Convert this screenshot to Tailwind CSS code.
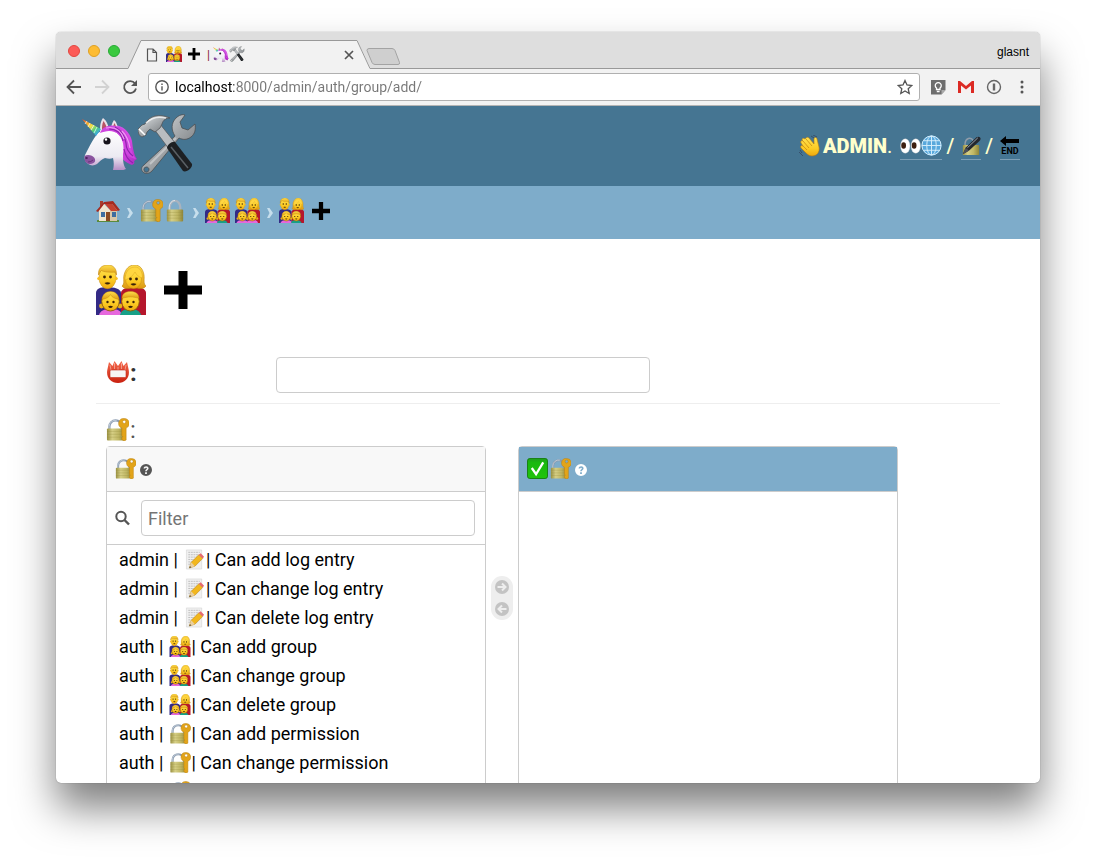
<!DOCTYPE html>
<html lang="en">
<head>
<meta charset="utf-8">
<title>Add group</title>
<script src="https://cdn.jsdelivr.net/npm/@tailwindcss/browser@4"></script>
</head>
<body class="h-screen overflow-hidden bg-white px-14 pt-8 pb-20 flex flex-col font-[Roboto,sans-serif] text-black">

<svg class="absolute size-0" aria-hidden="true">
  <defs>
    <linearGradient id="skin" x1="0" y1="0" x2="0" y2="1"><stop offset="0" stop-color="#ffe352"/><stop offset=".6" stop-color="#fccb24"/><stop offset="1" stop-color="#eda90f"/></linearGradient>
    <linearGradient id="hair" x1="0" y1="0" x2="0" y2="1"><stop offset="0" stop-color="#ffdf4d"/><stop offset="1" stop-color="#dd9a12"/></linearGradient>
    <linearGradient id="brass" x1="0" y1="0" x2="1" y2="0"><stop offset="0" stop-color="#9a9142"/><stop offset=".3" stop-color="#d6cf85"/><stop offset=".65" stop-color="#c0b764"/><stop offset="1" stop-color="#8d8439"/></linearGradient>
    <linearGradient id="steel" x1="0" y1="0" x2="1" y2="1"><stop offset="0" stop-color="#e6eaec"/><stop offset=".5" stop-color="#a2a6a9"/><stop offset="1" stop-color="#62666a"/></linearGradient>
    <linearGradient id="mane" x1="0" y1="0" x2="1" y2="1"><stop offset="0" stop-color="#c05be8"/><stop offset=".5" stop-color="#dc4be6"/><stop offset="1" stop-color="#a92bc0"/></linearGradient>
    <linearGradient id="horse" x1="0" y1="0" x2="0" y2="1"><stop offset="0" stop-color="#ffffff"/><stop offset=".65" stop-color="#eceaf2"/><stop offset="1" stop-color="#b58ac4"/></linearGradient>
    <linearGradient id="horn" x1="0" y1="0" x2="1" y2="1"><stop offset="0" stop-color="#e2452f"/><stop offset=".25" stop-color="#f4a02c"/><stop offset=".45" stop-color="#f3e24a"/><stop offset=".65" stop-color="#4fcf7a"/><stop offset=".85" stop-color="#3aa7e8"/><stop offset="1" stop-color="#7d6be0"/></linearGradient>
    <linearGradient id="red" x1="0" y1="0" x2="0" y2="1"><stop offset="0" stop-color="#f4694c"/><stop offset="1" stop-color="#c9200f"/></linearGradient>
    <linearGradient id="green" x1="0" y1="0" x2="0" y2="1"><stop offset="0" stop-color="#1f9c1c"/><stop offset=".2" stop-color="#19b80f"/><stop offset="1" stop-color="#20c40c"/></linearGradient>

    <g id="adults">
      <path d="M0 50V28c0-4 4-6 11-6s14 2 14 6v22z" fill="#332a85"/>
      <path d="M25 50V28c0-4 6-6 13-6s12 2 12 6v22z" fill="#b5162c"/>
      <ellipse cx="11.500" cy="12.500" rx="8.600" ry="11.200" fill="url(#skin)" stroke="#c98a12" stroke-width=".5"/>
      <circle cx="2.800" cy="13.500" r="1.600" fill="#f7bd1e"/><circle cx="20.200" cy="13.500" r="1.600" fill="#f7bd1e"/>
      <path d="M2.500 10C2 4 5 .5 11 0c6-.5 10 3.500 9.500 10l-1.500-3C14 7.500 8 7 5.500 5.500L4 7z" fill="url(#hair)" stroke="#bf830c" stroke-width=".5"/>
      <path d="M26 21c3-2 1-7 2-11C29.500 4 33 0 38.500 0S47 4 48 10c.6 4-1 9 2 11-2 3-6 3-9 2h-6c-3 1-7 1-9-2z" fill="url(#hair)" stroke="#bf830c" stroke-width=".6"/>
      <ellipse cx="37.500" cy="14" rx="8" ry="9.500" fill="url(#skin)" stroke="#c98a12" stroke-width=".5"/>
      <path d="M29 15c0-8 4-13 10-13 5 0 7.500 5 7.500 11-4-1-6-3-7.500-6-2 4-5.500 6.500-10 8z" fill="#ffd640" stroke="#d79a17" stroke-width=".4"/>
      <g fill="#3a2208"><circle cx="8.500" cy="12" r="1.400"/><circle cx="14.500" cy="12" r="1.400"/><circle cx="34.500" cy="14" r="1.400"/><circle cx="40.500" cy="14" r="1.400"/><path d="M8.500 18q3-1.500 6 0-3 3-6 0zM34.500 19q3-1.500 6 0-3 3-6 0z"/></g>
    </g>
    <g id="girl">
      <path d="M3 50c1-4 5-6 12-6s10 2 11 6z" fill="#e668dd"/>
      <circle cx="5.500" cy="41" r="2.400" fill="#eab01b"/><circle cx="24" cy="41" r="2.400" fill="#eab01b"/>
      <ellipse cx="14.500" cy="36.500" rx="8.800" ry="9.500" fill="url(#skin)" stroke="#8f5c08" stroke-width=".9"/>
      <path d="M6 34.500c.5-5 3.500-8 8.500-8s8 3 8.500 8c-4.500-1-7-2-8.500-5-1.500 3-4 4-8.500 5z" fill="url(#hair)" stroke="#c2860e" stroke-width=".4"/>
      <g fill="#3a2208"><circle cx="11.500" cy="37" r="1.200"/><circle cx="17.500" cy="37" r="1.200"/><path d="M12 41.500q2.500-1.500 5 0-2.500 3-5 0z"/></g>
    </g>
    <g id="boy">
      <path d="M24 50c1-4 4-6 10-6s10 2 11 6z" fill="#17a087"/>
      <ellipse cx="34.500" cy="36.500" rx="8.800" ry="9.500" fill="url(#skin)" stroke="#8f5c08" stroke-width=".9"/>
      <path d="M26 33.500c0-4.500 3-7 8.500-7s8.500 2.500 8.500 7c-5-2-12-2-17 0z" fill="url(#hair)" stroke="#c2860e" stroke-width=".4"/>
      <g fill="#3a2208"><circle cx="31.500" cy="37" r="1.200"/><circle cx="37.500" cy="37" r="1.200"/><path d="M32 41.500q2.500-1.500 5 0-2.500 3-5 0z"/></g>
    </g>
  </defs>

  <symbol id="family" viewBox="0 0 50 50"><use href="#adults"/><use href="#girl"/><use href="#boy"/></symbol>
  <symbol id="family-girls" viewBox="0 0 50 50"><use href="#adults"/><use href="#girl"/><use href="#girl" x="20"/></symbol>
  <symbol id="plus" viewBox="0 0 38 38"><path d="M14.500 0h9v14.500H38v9H23.500V38h-9V23.500H0v-9h14.500z" fill="#000"/></symbol>

  <symbol id="lock-key" viewBox="0 0 24 24">
    <path d="M3.500 12V9a6.500 6.500 0 0 1 13 0v3" fill="none" stroke="#8a9bb0" stroke-width="2.400"/>
    <path d="M3.200 12V9a6.800 6.800 0 0 1 8-6.600" fill="none" stroke="#c3ced9" stroke-width="1"/>
    <rect x="1" y="11" width="18.500" height="12.500" rx="1" fill="url(#brass)"/>
    <path d="M1 14h18M1 17h18M1 20h18" stroke="#8f8639" stroke-opacity=".35" stroke-width=".8"/>
    <path fill-rule="evenodd" d="M19 .5a5.200 5.200 0 0 1 2 10v12.500l-2 1-2.500-1.500v-2l1-1-1-1v-8A5.200 5.200 0 0 1 19 .5zm0 1.800a1.700 1.700 0 1 0 0 3.400 1.700 1.700 0 0 0 0-3.400z" fill="#e2a41a" stroke="#b87c0a" stroke-width=".5"/>
  </symbol>
  <symbol id="lock" viewBox="0 0 18 24">
    <path d="M3.500 12V8.500a5.500 6.500 0 0 1 11 0V12" fill="none" stroke="#a8b3bf" stroke-width="2.400"/>
    <path d="M3 12V8.500a6 7 0 0 1 6-7" fill="none" stroke="#dfe5ea" stroke-width="1"/>
    <rect x=".5" y="11" width="17" height="12.500" rx="1" fill="url(#brass)"/>
    <path d="M.5 14h17M.5 17h17M.5 20h17" stroke="#8f8639" stroke-opacity=".35" stroke-width=".8"/>
  </symbol>
  <symbol id="lock-pen" viewBox="0 0 22 22">
    <path d="M4.500 11V8a5 6 0 0 1 9-3" fill="none" stroke="#8f9ca9" stroke-width="1.600"/>
    <rect x="2" y="10" width="18" height="11" rx="1" fill="url(#brass)"/>
    <path d="M2 20l3-7L17 1.500c2-1.500 4.500-.5 4.500 1.500 0 1-.5 1.800-1.200 2.500L9 16z" fill="#23272e"/><path d="M2 20l3-7 4 3z" fill="#4c5159"/><path d="M7 13L18.500 2" stroke="#a3adb8" stroke-width="1"/>
  </symbol>

  <symbol id="unicorn" viewBox="0 0 56 54">
    <path d="M30 9c9-1 18 6 20 16 1 8 2 14 5 18l-3 2c1 2 0 3-2 4-5-2-10-5-13-11L27 16z" fill="url(#mane)"/>
    <path d="M18 17c0-6 0-11 3-15 4 3 6 8 6 14zM29 14c0-4 1-7 3-10 4 3 4 9 3 14z" fill="#e9dfe7"/><path d="M20 14c0-3 0-6 1.500-9 2 3 3.500 6 3.500 9zM31 14c0-3 0-4 1.500-7 2 3 2 7 1 10z" fill="#b85365"/>
    <path d="M16 17c5-4 15-4 20 1 6 6 6 14 5 20 0 6 0 11 3 15-4 2-9 2-13 1 1-4 1-8 0-12-2 1-5 1-8 0-3 1-5 3-8 6-3 2-7 2-10-1-2-2-3-5-2-8 4-7 7-15 13-22z" fill="url(#horse)"/>
    <path d="M2.500 40c3-2 8-1 10 2 1 2 1 4-1 5-3 2-6 1-8-1-1-2-1-4-1-6z" fill="#8a539f"/>
    <ellipse cx="4.500" cy="42" rx="1.300" ry=".9" fill="#4e205e"/><path d="M6 46q3 0 5-2" fill="none" stroke="#5e2a70" stroke-width=".8"/>
    <path d="M0 3l19 10-5 7z" fill="url(#horn)"/><path d="M5 5l-2 3M8 7l-2 4M12 9l-3 5M15 11l-3 6" stroke="#fff" stroke-opacity=".7" stroke-width="1"/>
    <path d="M18 17c2-6 9-9 16-7 8 2 12 8 14 16 1 7 2 12 6 17-6-1-12-5-12-12 1-5-1-9-5-12-3-3-6-4-10-4-3 0-6 1-9 2z" fill="#cf45df"/>
    <path d="M27 13c7 0 13 4 14 12M33 11c7 4 10 9 11 16 0 5 3 10 7 13M42 33c1 6 4 11 9 14" fill="none" stroke="#8f23ad" stroke-width="1.200"/>
    <path d="M24 12c9-2 15 3 18 11M40 15c5 5 7 11 8 17" fill="none" stroke="#ee9af3" stroke-width="1.200"/>
    <circle cx="25" cy="25" r="3.600" fill="#17131c"/><circle cx="24" cy="23.500" r="1.200" fill="#fff"/>
  </symbol>

  <symbol id="tools" viewBox="0 0 58 62">
    <path fill-rule="evenodd" d="M6 52L37 23c-4-6-4-13 1-18 3-3 7-4 9-3l-5 7 2 6 6 2 7-6c1 5 0 10-4 13-4 3-8 3-12 1L14 58c-3 3-7 3-9 1s-2-5 1-7zm2 2a2.600 2.600 0 1 0 3 3 2.600 2.600 0 0 0-3-3z" fill="url(#steel)" stroke="#4d4f52" stroke-width=".8"/>
    <path d="M12 51l26-26" stroke="#fff" stroke-opacity=".35" stroke-width="2"/>
    <path d="M16 16l6-5 16 20-7 5z" fill="#b9bdc0" stroke="#56595c" stroke-width=".8"/>
    <path d="M29 35c0-3 5-7 8-6l17 22c1 4-6 9-9 7z" fill="#1d2023"/><path d="M33 34l17 21" stroke="#5a6065" stroke-width="1.500"/>
    <path d="M0 16l4-4 3-1C11 3 21 0 32 5c-4 0-7 2-8 6l-2 4-5 4-5-3-3 3-1 3-4 2c-3-1-4-4-4-8z" fill="url(#steel)" stroke="#505356" stroke-width=".8"/>
    <path d="M8 10c5-5 12-7 20-5" fill="none" stroke="#fff" stroke-opacity=".7" stroke-width="1.500"/><path d="M1 16l6 6" stroke="#fff" stroke-width="1.600"/>
  </symbol>

  <symbol id="wave" viewBox="0 0 22 22">
    <path d="M7 3c1-1 2-1 3 0l5 6V4c0-2 3-2 3 0l2 8c1 5-2 9-7 9-3 0-5-2-7-4l-4-4c-1-2 0-3 2-2L2 8c-1-2 1-3 2-2L3 5c0-2 2-2 3-1z" fill="url(#skin)" stroke="#b97b10" stroke-width=".6"/>
    <path d="M4 6l6 7M7 4l6 7M4 11l4 4" stroke="#c98a12" stroke-width=".8" fill="none"/>
    <path d="M12 1l3 2M14 0l4 2M1 15l2 3M0 17l4 4" stroke="#37506b" stroke-width="1" fill="none"/>
  </symbol>
  <symbol id="eyes" viewBox="0 0 22 20"><g fill="#fff" stroke="#b9bec4" stroke-width=".4"><ellipse cx="5.500" cy="10" rx="5" ry="7.600"/><ellipse cx="16.500" cy="10" rx="5" ry="7.600"/></g><g fill="#3d1f10"><ellipse cx="3.800" cy="9.500" rx="2.500" ry="3.400"/><ellipse cx="14.800" cy="9.500" rx="2.500" ry="3.400"/></g></symbol>
  <symbol id="globe" viewBox="0 0 22 22"><circle cx="11" cy="11" r="10.500" fill="#58a8dc"/><g fill="none" stroke="#d6eefb" stroke-width="1"><circle cx="11" cy="11" r="10"/><ellipse cx="11" cy="11" rx="5" ry="10"/><path d="M11 1v20M1 11h20M3 6h16M3 16h16"/></g></symbol>
  <symbol id="house" viewBox="0 0 24 24">
    <path d="M1 21h22v2H1z" fill="#5b8b3c"/><path d="M4 2h3v7H4z" fill="#a93c2c"/>
    <path d="M3 11l5-6 6 6v11H3z" fill="#f1e5cf"/><path d="M14 11l3-6 4 6v11h-7z" fill="#d8c7a8"/>
    <path d="M0 12L8 3l9-1 7 9-2 1-6-7-8 0-6 8z" fill="#a52a20"/><path d="M9 5l7 0 6 7h-7z" fill="#c5402f"/>
    <rect x="5" y="13" width="4" height="5" fill="#3e6da0"/><rect x="10" y="13" width="4" height="9" fill="#8c4a22"/><rect x="16" y="13" width="4" height="5" fill="#3e6da0"/>
  </symbol>
  <symbol id="badge" viewBox="0 0 24 24"><path d="M1.500 9L3 2l3.500 4L8.500 1 12 6l3.500-5 2 5L21 2l1.500 7c2 8-3 14-10.500 14S-.5 17 1.500 9z" fill="url(#red)"/><path d="M4 5l1 5M8.500 3v6M12 7v3M15.500 3v6M20 5l-1 5" stroke="#fff" stroke-opacity=".5" stroke-width=".8"/><rect x="4" y="10" width="16" height="7.500" rx="1" fill="#f7f5f5" stroke="#c42a19" stroke-width=".6"/></symbol>
  <symbol id="memo" viewBox="0 0 20 22">
    <path d="M1 1h16v20H1z" fill="#f0f0f0" stroke="#d2d2d2" stroke-width=".6"/><path d="M3 3.500h12M3 6h12M3 8.500h9M3 11h7M3 13.500h5M3 16h4" stroke="#b2b2b2" stroke-width=".8" stroke-dasharray="2 .7"/>
    <path d="M4 20l2-6 8-8 4 4-8 8z" fill="#f2b71d" stroke="#b27b0c" stroke-width=".5"/><path d="M14 6l2-1.500L19.500 8 18 10z" fill="#e66a72"/><path d="M4 20l2-6 4 4z" fill="#e9cfa0"/><path d="M4 20l.8-2 1.200 1.200z" fill="#222"/>
  </symbol>
  <symbol id="check" viewBox="0 0 22 22"><rect x=".5" y=".5" width="21" height="21" rx="2.500" fill="url(#green)" stroke="#168010"/><path d="M5 10.500l4.500 6.500L17 4.500" fill="none" stroke="#fff" stroke-width="2.400"/></symbol>
  <symbol id="chevron" viewBox="0 0 8 12"><path d="M1 1h2.500L7 6l-3.500 5H1l2.500-5z" fill="#c6deec"/></symbol>
  <symbol id="help" viewBox="0 0 12 12"><path fill-rule="evenodd" d="M6 0a6 6 0 1 1 0 12A6 6 0 0 1 6 0zM3.600 4.500h1.600c0-1.200 1.700-1.100 1.700 0 0 .8-1.700 1-1.700 2.800h1.600c0-1 1.800-1.300 1.800-3C8.600 1.400 3.600 1.400 3.600 4.500zM5.100 8.200v1.700h1.800V8.200z"/></symbol>
</svg>

<div class="flex min-h-0 flex-1 flex-col overflow-hidden rounded-[5px] bg-white shadow-[0_25px_40px_rgba(0,0,0,0.5),0_0_1px_rgba(0,0,0,0.5)]">

  <!-- Tab strip -->
  <div class="flex h-[37px] shrink-0 items-end bg-[#dedede]">
    <div class="flex h-full w-[72px] items-center gap-2 border-b border-[#999] pt-0.5 pl-3">
      <button aria-label="Close window" class="size-3 rounded-full border border-[#e2463f] bg-[#fc5b57]"></button>
      <button aria-label="Minimize window" class="size-3 rounded-full border border-[#dfa023] bg-[#fdbc33]"></button>
      <button aria-label="Zoom window" class="size-3 rounded-full border border-[#27aa35] bg-[#3ac93f]"></button>
    </div>
    <svg class="h-[29px] w-3.5" viewBox="0 0 14 29" aria-hidden="true"><path d="M0 29L13 .5h1V29z" fill="#f2f2f2"/><path d="M0 28.500L13 .5h1" fill="none" stroke="#999"/></svg>
    <div class="flex h-[29px] w-[215px] items-center border-t border-[#999] bg-[#f2f2f2] pl-1">
      <svg class="mr-2 h-3.5 w-3 shrink-0" viewBox="0 0 12 14" fill="none" stroke="#555" stroke-width="1.200" aria-hidden="true"><path d="M1.500 1h5.500l3.500 3.500V13h-9zM7 1v3.500h3.500"/></svg>
      <svg class="mb-0.5 size-4" role="img" aria-label="Group"><use href="#family"/></svg>
      <svg class="mr-1 mb-0.5 ml-1.5 size-3"><use href="#plus"/></svg>
      <span class="mx-[3px] text-xs text-[#823]">|</span>
      <svg class="mb-0.5 size-4"><use href="#unicorn"/></svg>
      <svg class="mb-0.5 size-4"><use href="#tools"/></svg>
      <button aria-label="Close tab" class="mr-[3px] ml-auto"><svg class="size-2.5" viewBox="0 0 10 10" stroke="#555" stroke-width="1.700"><path d="M1 1l8 8M9 1L1 9"/></svg></button>
    </div>
    <button aria-label="New tab" class="h-[29px] w-11"><svg class="h-[29px] w-11" viewBox="0 0 44 29"><path d="M0 0l14 29H0z" fill="#f2f2f2"/><path d="M0 .5L13 28.500H44" fill="none" stroke="#999"/><path d="M12 8.500h23q2 0 3 2l4.500 12q.5 2-1.500 2H18q-2 0-3-2l-5-12q0-2 2-2z" fill="#cfcfcf" stroke="#a3a3a3"/></svg></button>
    <div class="flex h-full flex-1 items-center justify-end border-b border-[#999] pt-1 pr-[11px] text-xs"><span class="font-['Liberation_Sans',sans-serif]">glasnt</span></div>
  </div>

  <!-- Toolbar -->
  <div class="flex h-[37px] shrink-0 items-center border-b border-[#b4b4b4] bg-[#f2f2f2] px-2.5">
    <div class="flex gap-3">
      <button aria-label="Back"><svg class="size-4" viewBox="0 0 16 16" fill="none" stroke="#555" stroke-width="1.800"><path d="M15 8H2M8 1.500L1.500 8 8 14.500"/></svg></button>
      <button aria-label="Forward" disabled><svg class="size-4" viewBox="0 0 16 16" fill="none" stroke="#d2d2d2" stroke-width="1.800"><path d="M1 8h13M8 1.500L14.500 8 8 14.500"/></svg></button>
      <button aria-label="Reload"><svg class="size-4" viewBox="0 0 16 16"><path d="M13 4.500A6 6 0 1 0 14 9.500" fill="none" stroke="#555" stroke-width="1.800"/><path d="M15 1v6H9z" fill="#555"/></svg></button>
    </div>
    <div class="ml-2.5 flex h-7 flex-1 items-center rounded-[3px] border border-[#b0b0b0] bg-white px-1.5">
      <svg class="size-3.5 shrink-0" viewBox="0 0 14 14" fill="none" stroke="#555" stroke-width="1.400" aria-hidden="true"><circle cx="7" cy="7" r="6.200"/><path d="M7 6.200v4.200M7 3.500v1.500"/></svg>
      <input aria-label="Address" value="localhost:8000/admin/auth/group/add/" class="ml-1.5 min-w-0 flex-1 bg-[linear-gradient(to_right,#000_59px,#777_59px)] bg-clip-text text-sm text-transparent outline-none">
      <button aria-label="Bookmark"><svg class="size-4" viewBox="0 0 16 16" fill="none" stroke="#555" stroke-width="1.300"><path d="M8 1.500l2 4.500 4.800.5-3.600 3.200 1 4.800L8 12l-4.200 2.500 1-4.800L1.200 6.500 6 6z"/></svg></button>
    </div>
    <div class="ml-2.5 flex gap-3">
      <button aria-label="Keep"><svg class="size-4" viewBox="0 0 16 16"><path d="M1 1h14.500v10l-4 4.500H1z" fill="#6e6e6e"/><path d="M11.500 15.500V11h4z" fill="#aaa"/><path d="M6.500 9a3 3 0 1 1 3.500 0v1.500H6.500z" fill="none" stroke="#fff" stroke-width="1.300"/><path d="M6.800 12.500h2.800" stroke="#fff" stroke-width="1.300"/></svg></button>
      <button aria-label="Gmail"><svg class="size-4" viewBox="0 0 16 16"><path d="M0 2h16v12H0z" fill="#f6f0ef"/><path d="M0 2h2l6 5 6-5h2v12h-3V6.500L8 10.500l-5-4V14H0z" fill="#dc2a24"/></svg></button>
      <button aria-label="Password manager"><svg class="size-4" viewBox="0 0 16 16"><circle cx="8" cy="8" r="6.500" fill="none" stroke="#666" stroke-width="1.400"/><path d="M6.800 4.500h2.400v7H6.800z" fill="#666"/></svg></button>
      <button aria-label="Menu"><svg class="size-4" viewBox="0 0 16 16" fill="#555"><circle cx="8" cy="3" r="1.500"/><circle cx="8" cy="8" r="1.500"/><circle cx="8" cy="13" r="1.500"/></svg></button>
    </div>
  </div>

  <!-- Site header -->
  <header class="flex h-20 shrink-0 items-center bg-[#457592] pr-5 pl-[26px] text-[#ffffcc]">
    <a href="#" aria-label="Site administration" class="flex items-center pb-1">
      <svg class="mb-0.5 h-[54px] w-14"><use href="#unicorn"/></svg>
      <svg class="h-[62px] w-[58px]"><use href="#tools"/></svg>
    </a>
    <div class="ml-auto flex items-center text-xl">
      <svg class="mr-0.5 size-[22px]" role="img" aria-label="Welcome"><use href="#wave"/></svg>
      <strong class="font-black">ADMIN</strong><span class="mr-2">.</span>
      <a href="#" aria-label="View site" class="flex h-7 items-center border-b border-[#7d9fb6]"><svg class="h-5 w-[21px]"><use href="#eyes"/></svg><svg class="size-[21px]"><use href="#globe"/></svg></a>
      <span class="mx-1 font-medium">/</span>
      <a href="#" aria-label="Change password" class="ml-[3px] flex h-7 items-center border-b border-[#7d9fb6]"><svg class="size-5"><use href="#lock-pen"/></svg></a>
      <span class="mx-1 font-medium">/</span>
      <a href="#" class="ml-[3px] flex h-7 w-5 flex-col items-center justify-center border-b border-[#7d9fb6] text-black"><svg class="h-2.5 w-5" viewBox="0 0 20 10"><path d="M0 5l6-5v3h13v4H6v3z" fill="#000"/></svg><span class="text-[9px] leading-[10px] font-bold">END</span></a>
    </div>
  </header>

  <!-- Breadcrumbs -->
  <nav aria-label="Breadcrumbs" class="flex h-[53px] shrink-0 items-center bg-[#7eacca] px-10 pb-1">
    <a href="#" aria-label="Home"><svg class="size-6"><use href="#house"/></svg></a>
    <svg class="mx-1.5 mt-1 h-3 w-2"><use href="#chevron"/></svg>
    <a href="#" aria-label="Authentication and authorization" class="flex gap-[3px]"><svg class="size-[23px]"><use href="#lock-key"/></svg><svg class="h-[23px] w-[18px]"><use href="#lock"/></svg></a>
    <svg class="mr-[5px] ml-2 mt-1 h-3 w-2"><use href="#chevron"/></svg>
    <a href="#" aria-label="Groups" class="flex gap-[5px]"><svg class="size-[25px]"><use href="#family"/></svg><svg class="size-[25px]"><use href="#family-girls"/></svg></a>
    <svg class="mr-[5px] ml-1.5 mt-1 h-3 w-2"><use href="#chevron"/></svg>
    <svg class="size-[25px]"><use href="#family"/></svg>
    <svg class="ml-2 size-[18px]"><use href="#plus"/></svg>
  </nav>

  <!-- Content -->
  <main class="min-h-0 flex-1 overflow-hidden px-10 pt-[26px]">
    <h1 aria-label="Add group" class="flex items-center gap-[18px]">
      <svg class="size-[50px]"><use href="#family"/></svg>
      <svg class="size-[38px]"><use href="#plus"/></svg>
    </h1>
    <form>
      <div class="mt-[42px] flex border-b border-[#eee] pb-2.5 pl-2.5">
        <label for="name" class="flex w-[170px] items-center pb-1 text-2xl leading-8 font-bold text-[#333]"><svg class="mb-0.5 size-6" role="img" aria-label="Name"><use href="#badge"/></svg>:</label>
        <input id="name" type="text" class="h-9 w-[374px] rounded border border-[#ccc] px-2 text-lg outline-none">
      </div>
      <div class="pt-2.5 pl-2.5">
        <label for="filter" class="flex h-8 items-center text-2xl text-[#555]"><svg class="mr-px mb-0.5 size-[23px]" role="img" aria-label="Permissions"><use href="#lock-key"/></svg>:</label>
        <div class="flex h-[420px]">
          <section class="flex w-[380px] flex-col rounded-t border border-[#ccc]">
            <h2 class="flex h-[45px] shrink-0 items-center gap-1 border-b border-[#ccc] bg-[#f8f8f8] px-2">
              <svg class="mb-0.5 size-[21px]"><use href="#lock-key"/></svg>
              <svg class="mt-0.5 size-3 fill-[#555]" role="img" aria-label="Available permissions help"><use href="#help"/></svg>
            </h2>
            <div class="flex h-[53px] shrink-0 items-center border-b border-[#ccc] px-2">
              <svg class="mr-2.5 size-4" viewBox="0 0 16 16" fill="none" stroke="#555" aria-hidden="true"><circle cx="6" cy="6.500" r="4.700" stroke-width="2"/><path d="M9.500 10l4.500 4.500" stroke-width="2.400"/></svg>
              <input id="filter" type="text" placeholder="Filter" class="mr-0.5 h-9 min-w-0 flex-1 rounded border border-[#ccc] px-1.5 text-lg outline-none placeholder:text-[#757575]">
            </div>
            <ul role="listbox" aria-label="Available permissions" class="min-h-0 flex-1 overflow-hidden pl-3 text-lg leading-[29px]">
              <li role="option" class="flex h-[29px] items-center">admin |<svg class="ml-1.5 h-[21px] w-[22px]"><use href="#memo"/></svg>| Can add log entry</li>
              <li role="option" class="flex h-[29px] items-center">admin |<svg class="ml-1.5 h-[21px] w-[22px]"><use href="#memo"/></svg>| Can change log entry</li>
              <li role="option" class="flex h-[29px] items-center">admin |<svg class="ml-1.5 h-[21px] w-[22px]"><use href="#memo"/></svg>| Can delete log entry</li>
              <li role="option" class="flex h-[29px] items-center">auth |<svg class="ml-1.5 h-[21px] w-[22px]"><use href="#family"/></svg>| Can add group</li>
              <li role="option" class="flex h-[29px] items-center">auth |<svg class="ml-1.5 h-[21px] w-[22px]"><use href="#family"/></svg>| Can change group</li>
              <li role="option" class="flex h-[29px] items-center">auth |<svg class="ml-1.5 h-[21px] w-[22px]"><use href="#family"/></svg>| Can delete group</li>
              <li role="option" class="flex h-[29px] items-center">auth |<svg class="ml-1.5 h-[21px] w-[22px]"><use href="#lock-key"/></svg>| Can add permission</li>
              <li role="option" class="flex h-[29px] items-center">auth |<svg class="ml-1.5 h-[21px] w-[22px]"><use href="#lock-key"/></svg>| Can change permission</li>
              <li role="option" class="flex h-[29px] items-center">auth |<svg class="ml-1.5 h-[21px] w-[22px]"><use href="#lock-key"/></svg>| Can delete permission</li>
            </ul>
          </section>
          <div class="mx-[5px] mt-[130px] flex h-11 w-[22px] flex-col items-center justify-between rounded-full bg-[#eee] py-1">
            <button type="button" aria-label="Choose"><svg class="block size-3.5" viewBox="0 0 14 14"><circle cx="7" cy="7" r="7" fill="#c3c3c3"/><path d="M2.500 7h8M7 3.500L10.500 7 7 10.500" fill="none" stroke="#eee" stroke-width="2"/></svg></button>
            <button type="button" aria-label="Remove"><svg class="block size-3.5" viewBox="0 0 14 14"><circle cx="7" cy="7" r="7" fill="#c3c3c3"/><path d="M11.500 7h-8M7 3.500L3.500 7 7 10.500" fill="none" stroke="#eee" stroke-width="2"/></svg></button>
          </div>
          <section class="flex w-[380px] flex-col rounded-t border border-[#ccc]">
            <h2 class="flex h-[45px] shrink-0 items-center border-b border-[#ccc] bg-[#7eacca] px-2">
              <svg class="mr-0.5 mb-0.5 size-[21px]"><use href="#check"/></svg>
              <svg class="mb-0.5 size-[21px]"><use href="#lock-key"/></svg>
              <svg class="mt-0.5 ml-1 size-3 fill-white" role="img" aria-label="Chosen permissions help"><use href="#help"/></svg>
            </h2>
          </section>
        </div>
      </div>
    </form>
  </main>
</div>
</body>
</html>
